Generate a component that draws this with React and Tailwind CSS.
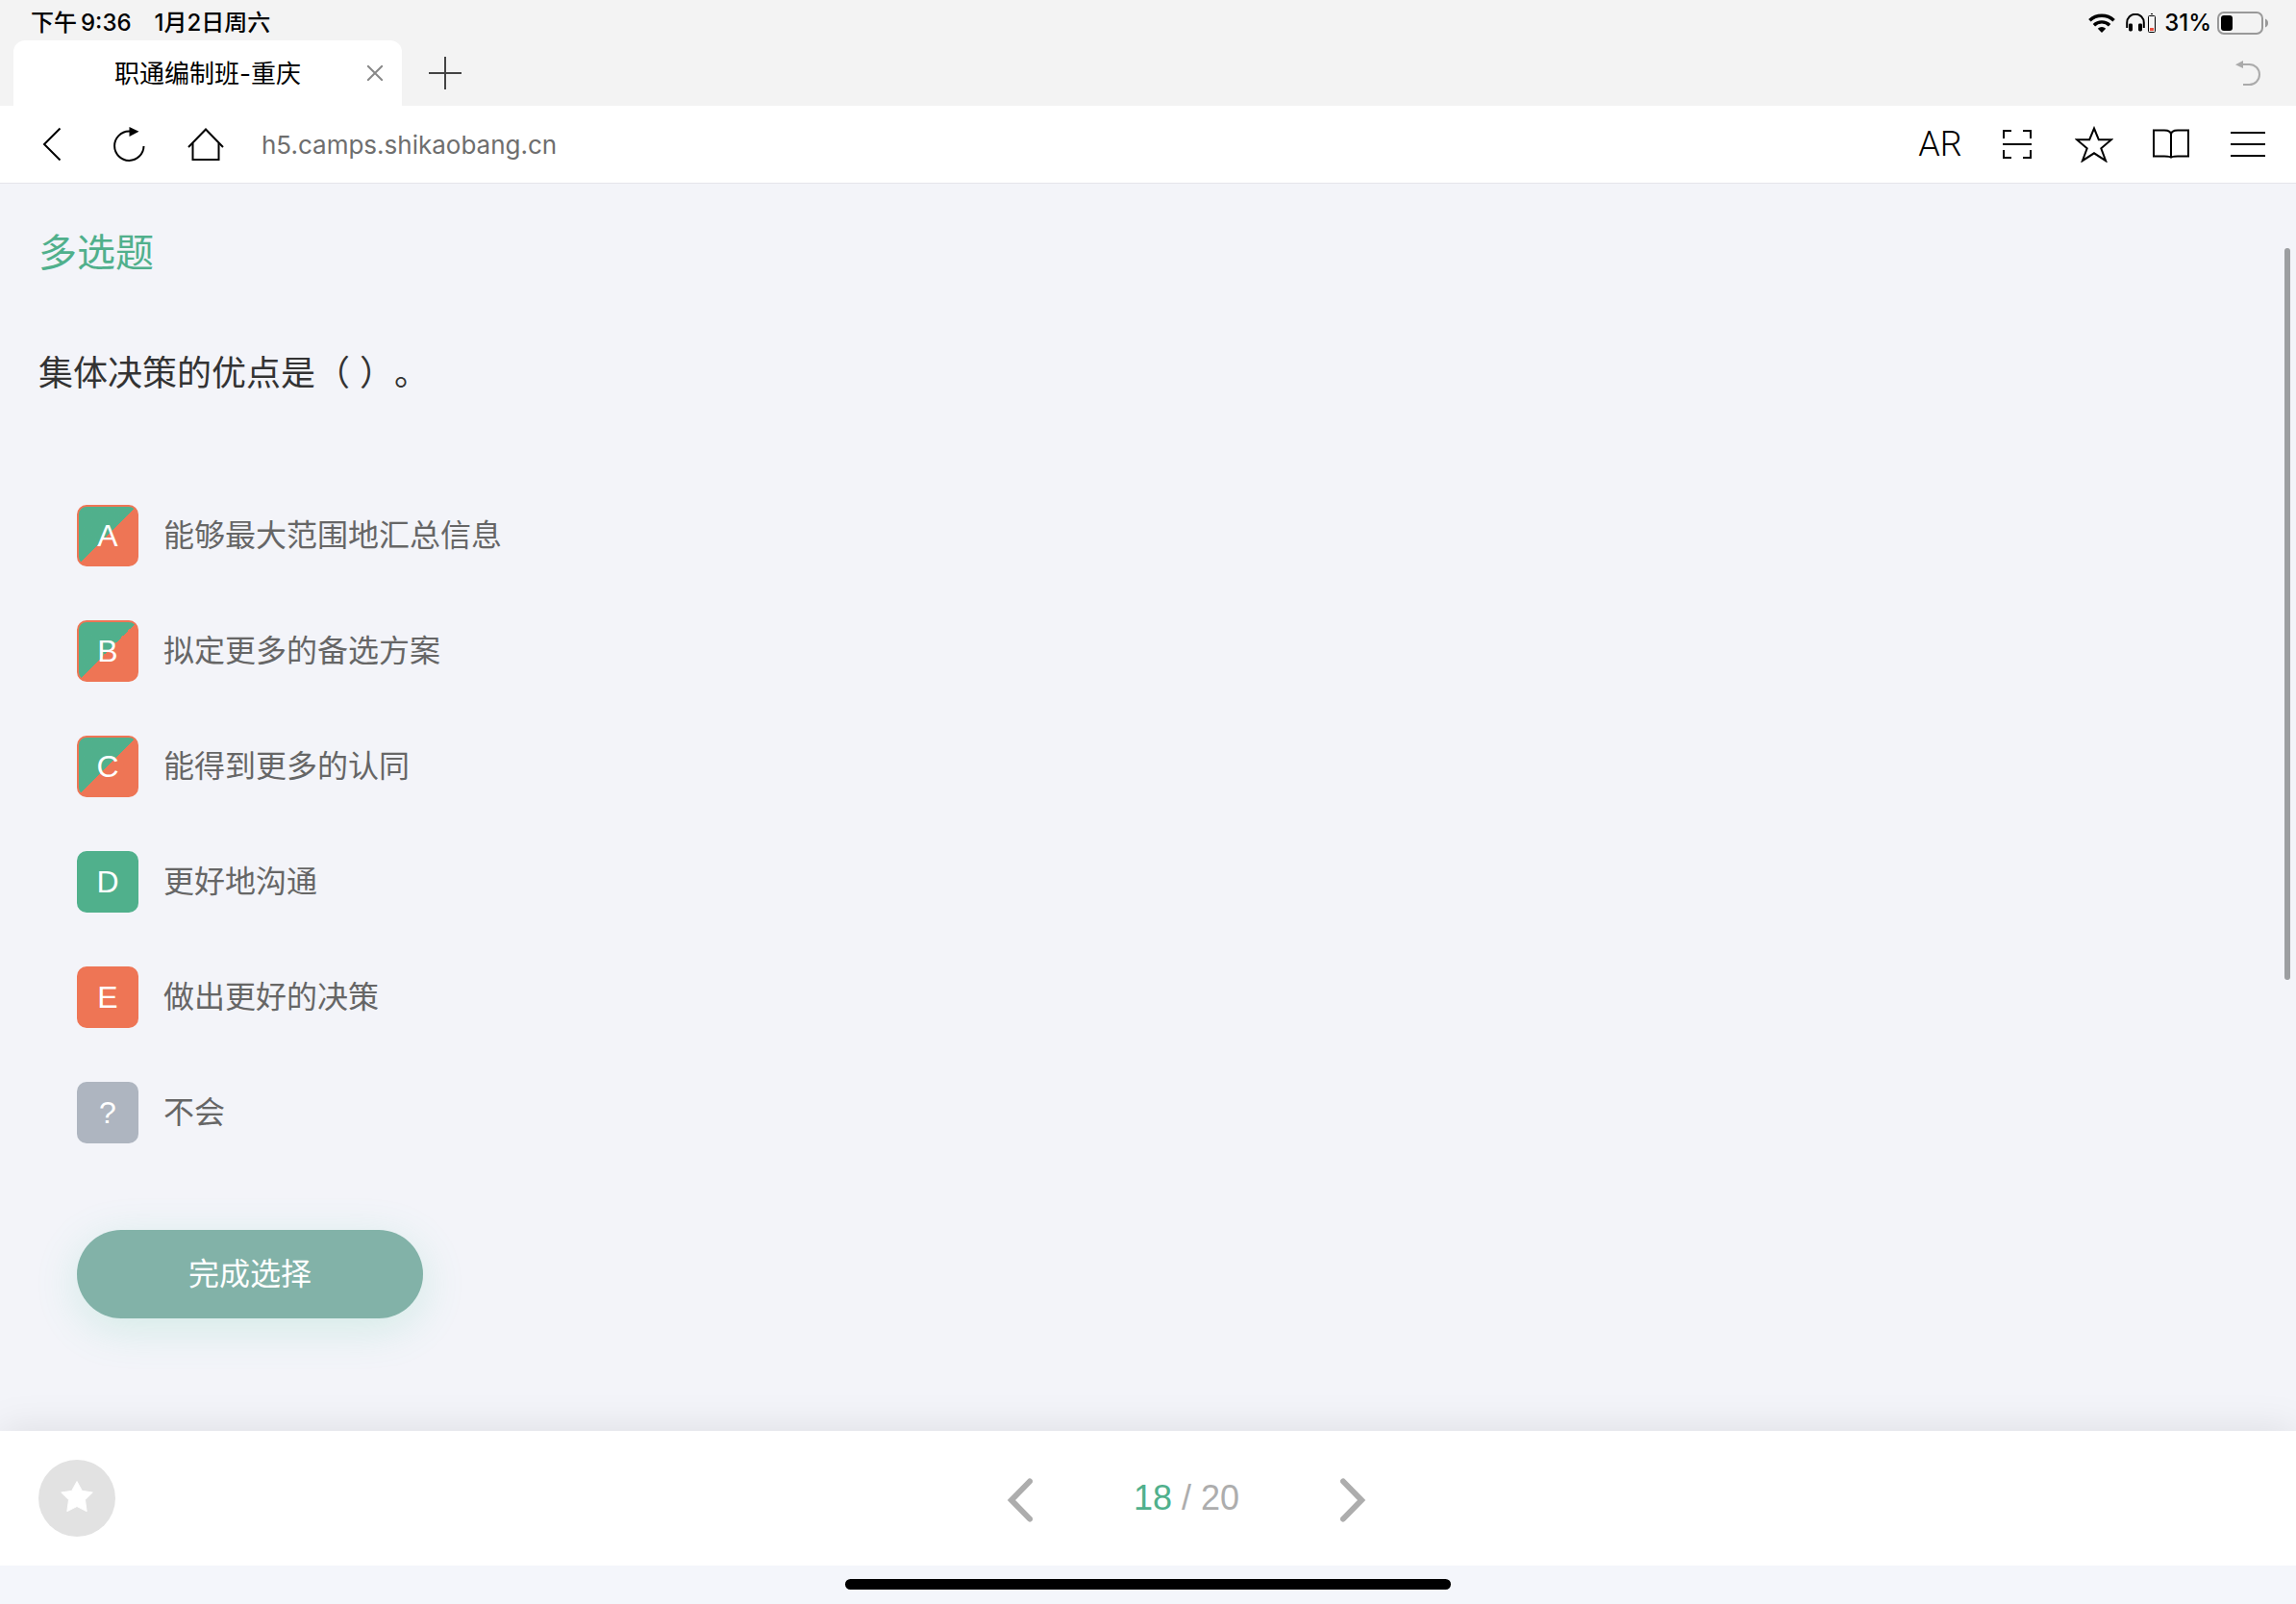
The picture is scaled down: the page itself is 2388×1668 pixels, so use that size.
import React from 'react';

const options = [
  { key: 'A', label: '能够最大范围地汇总信息', state: 'split' },
  { key: 'B', label: '拟定更多的备选方案', state: 'split' },
  { key: 'C', label: '能得到更多的认同', state: 'split' },
  { key: 'D', label: '更好地沟通', state: 'right' },
  { key: 'E', label: '做出更好的决策', state: 'chosen' },
  { key: '?', label: '不会', state: 'unknown' },
];

const badgeStyles = {
  split:
    'border-2 border-[#ee7555] bg-linear-to-br from-[#50b08c] from-50% to-[#ee7555] to-50%',
  right: 'bg-[#50b08c]',
  chosen: 'bg-[#ee7555]',
  unknown: 'bg-[#aeb5c0]',
};

const StatusBar = () => (
  <div className="flex h-[42px] items-center justify-between pt-1.5 pl-8 pr-7 text-2xl font-medium text-black">
    <div className="flex">
      <span>下午</span>
      <span className="ml-1">9:36</span>
      <span className="ml-6">1月2日周六</span>
    </div>
    <div className="flex items-center">
      {/* Wi-Fi */}
      <svg className="h-5 w-7" viewBox="0 0 28 20" fill="none" stroke="#000">
        <path d="M1.4 7.200a18.500 18.500 0 0 1 25.200 0" strokeWidth="3.600" />
        <path d="M5.900 12.200a11.600 11.600 0 0 1 16.200 0" strokeWidth="3.400" />
        <path d="M14 20l-4.200-4.200a6 6 0 0 1 8.400 0z" fill="#000" stroke="none" />
      </svg>
      {/* Headphones and their battery */}
      <svg className="ml-[11px] h-5 w-8" viewBox="0 0 32 20" fill="none" stroke="#000">
        <path d="M1.2 15V9.5a8.8 8.8 0 0 1 17.6 0V15" strokeWidth="2" />
        <rect x="3" y="10.5" width="4" height="8" rx="1.4" fill="#000" stroke="none" />
        <rect x="13" y="10.5" width="4" height="8" rx="1.4" fill="#000" stroke="none" />
        <path d="M26 .5h2" strokeWidth="1" />
        <rect x="23.5" y="2.5" width="7" height="17" rx="1" strokeWidth="1" />
        <rect x="25" y="15" width="4" height="3" fill="#eb4d3d" stroke="none" />
      </svg>
      <span className="ml-2">31%</span>
      <svg className="ml-1.5 h-6 w-[54px]" viewBox="0 0 54 24" fill="none">
        <rect x="1" y="1" width="46" height="22" rx="6" stroke="#999" strokeWidth="2" />
        <rect x="4" y="4" width="12" height="16" rx="3" fill="#000" />
        <path d="M50 7.5c2 .8 3 2.500 3 4.500s-1 3.700-3 4.500z" fill="#999" />
      </svg>
    </div>
  </div>
);

const TabBar = () => (
  <div className="flex h-[68px] items-stretch justify-between pl-3.5 pr-2.5">
    <div className="flex">
      <div className="flex w-[404px] items-center rounded-t-xl bg-white">
        <span className="ml-14 flex-1 text-center text-[26px] text-black">职通编制班-重庆</span>
        <button type="button" aria-label="关闭标签页" className="flex h-full w-14 items-center justify-center">
          <svg className="h-4 w-4" viewBox="0 0 16 16" stroke="#888" strokeWidth="2">
            <path d="M0 0l16 16M16 0L0 16" />
          </svg>
        </button>
      </div>
      <button type="button" aria-label="新建标签页" className="flex w-[90px] items-center justify-center">
        <svg className="h-[34px] w-[34px]" viewBox="0 0 34 34" stroke="#444" strokeWidth="2">
          <path d="M17 0v34M0 17h34" />
        </svg>
      </button>
    </div>
    <button type="button" aria-label="恢复" className="flex w-20 items-center justify-center">
      <svg className="h-[26px] w-[26px]" viewBox="0 0 26 26" fill="none" stroke="#aaa" strokeWidth="2">
        <path d="M7 4h7.500a10.500 10.500 0 0 1 0 21H8" />
        <path d="M0 4.200L8 0v8z" fill="#aaa" stroke="none" />
      </svg>
    </button>
  </div>
);

const ToolButton = ({ label, children }) => (
  <button type="button" aria-label={label} className="flex h-20 w-20 items-center justify-center">
    {children}
  </button>
);

const Toolbar = () => (
  <div className="flex items-center border-b border-[#e5e5ea] bg-white pl-3.5 pr-2.5 text-black">
    <ToolButton label="返回">
      <svg className="h-9 w-5" viewBox="0 0 20 36" fill="none" stroke="#000" strokeWidth="2">
        <path d="M18.500 1.500L2 18l16.500 16.500" />
      </svg>
    </ToolButton>
    <ToolButton label="刷新">
      <svg className="h-9 w-[34px]" viewBox="0 0 34 36" fill="none" stroke="#000" strokeWidth="2">
        <path d="M18 4.500h-1A15.200 15.200 0 1 0 32.500 20" />
        <path d="M17.500 0l10 4.800-10 5.200z" fill="#000" stroke="none" />
      </svg>
    </ToolButton>
    <ToolButton label="主页">
      <svg className="h-[34px] w-[38px]" viewBox="0 0 38 34" fill="none" stroke="#000" strokeWidth="2">
        <path d="M1 20L19 1.500 37 20" />
        <path d="M5.500 16v17h27V16" />
      </svg>
    </ToolButton>
    <input
      type="text"
      aria-label="网址"
      defaultValue="h5.camps.shikaobang.cn"
      className="ml-[18px] min-w-0 flex-1 bg-transparent text-[26px] text-[#6e6e6e] outline-none"
    />
    <button
      type="button"
      className="h-20 w-20 text-center font-['Roboto',sans-serif] text-4xl font-light"
    >
      AR
    </button>
    <ToolButton label="扫描">
      <svg className="h-[30px] w-[30px]" viewBox="0 0 30 30" fill="none" stroke="#000" strokeWidth="2">
        <path d="M1 9V1h8M21 1h8v8M29 21v8h-8M9 29H1v-8M0 15h30" />
      </svg>
    </ToolButton>
    <ToolButton label="收藏">
      <svg className="h-[38px] w-10" viewBox="0 0 40 38" fill="none" stroke="#000" strokeWidth="2">
        <path d="M20 2.500l4.800 11.700h13.200L27.300 23.300l4.800 12.900L20 28.300 7.900 36.200l4.800-12.900L2 14.200h13.200z" />
      </svg>
    </ToolButton>
    <ToolButton label="书签">
      <svg className="h-8 w-[38px]" viewBox="0 0 38 32" fill="none" stroke="#000" strokeWidth="2">
        <path d="M19 30.500V6c0-3-3-4.500-7-4.500H1v27h11c4 0 7 .5 7 2 0-1.500 3-2 7-2h11v-27H26c-4 0-7 1.500-7 4.500" />
      </svg>
    </ToolButton>
    <ToolButton label="菜单">
      <svg className="h-[26px] w-9" viewBox="0 0 36 26" stroke="#000" strokeWidth="2">
        <path d="M0 1h36M0 13h36M0 25h36" />
      </svg>
    </ToolButton>
  </div>
);

const App = () => {
  return (
    <div className="flex min-h-screen flex-col bg-[#f3f4f9] font-['Inter','Noto_Sans_CJK_SC',sans-serif]">
      <header className="bg-[#f3f3f3]">
        <StatusBar />
        <TabBar />
        <Toolbar />
      </header>

      {/* Question */}
      <main className="relative flex-1 px-10 pt-11 font-['Liberation_Sans','Noto_Sans_CJK_SC',sans-serif]">
        <h1 className="text-[40px] leading-14 text-[#50b08c]">多选题</h1>
        <p className="mt-[70px] text-4xl leading-14 text-[#333] [text-spacing-trim:space-all]">
          集体决策的优点是（ ）。
        </p>

        <ul className="mt-[108px] flex flex-col gap-14 pl-10">
          {options.map((option) => (
            <li key={option.key}>
              <button type="button" className="flex h-16 items-center gap-[26px] text-[32px] text-[#666]">
                <span
                  className={`flex h-16 w-16 items-center justify-center rounded-[10px] text-white ${badgeStyles[option.state]}`}
                >
                  {option.key}
                </span>
                <span>{option.label}</span>
              </button>
            </li>
          ))}
        </ul>

        <button
          type="button"
          className="mt-[90px] ml-10 h-[92px] w-[360px] rounded-full bg-[#82b2a8] text-[32px] text-white shadow-[0_10px_45px_rgba(80,200,160,0.2)]"
        >
          完成选择
        </button>

        <div className="absolute top-[67px] right-1.5 h-[761px] w-1.5 rounded-full bg-[#9c9ea1]" />
      </main>

      <footer className="flex h-[140px] items-center bg-white px-10 font-['Liberation_Sans',sans-serif] shadow-[0_0_40px_rgba(0,0,0,0.1)]">
        <button
          type="button"
          aria-label="收藏本题"
          className="flex h-20 w-20 items-center justify-center rounded-full bg-[#e2e2e2]"
        >
          <svg className="mb-1 h-[34px] w-[34px]" viewBox="0 0 34 34" fill="#fff" stroke="#fff" strokeLinejoin="round">
            <path d="M17 1.500l5.300 9.800 11 1.700-7.800 7.700 1.700 12L17 27.500 6.800 32.700l1.700-12L.7 13l11-1.700z" />
          </svg>
        </button>
        <div className="flex flex-1 items-center justify-center text-4xl text-[#adadad]">
          <button type="button" aria-label="上一题" className="pt-1">
            <svg className="h-[46px] w-[26px]" viewBox="0 0 26 46" fill="none" stroke="#adadad" strokeWidth="6" strokeLinecap="round">
              <path d="M23 3.500L4 23 23 42.500" />
            </svg>
          </button>
          <span className="w-80 text-center">
            <span className="text-[#50b08c]">18</span> / 20
          </span>
          <button type="button" aria-label="下一题" className="pt-1">
            <svg className="h-[46px] w-[26px]" viewBox="0 0 26 46" fill="none" stroke="#adadad" strokeWidth="6" strokeLinecap="round">
              <path d="M3 3.500L22 23 3 42.500" />
            </svg>
          </button>
        </div>
      </footer>

      {/* Home indicator */}
      <div className="relative flex h-10 justify-center bg-[#f4f6fb] pt-3.5">
        <div className="h-[11px] w-[630px] rounded-full bg-black" />
      </div>
    </div>
  );
};

export default App;
